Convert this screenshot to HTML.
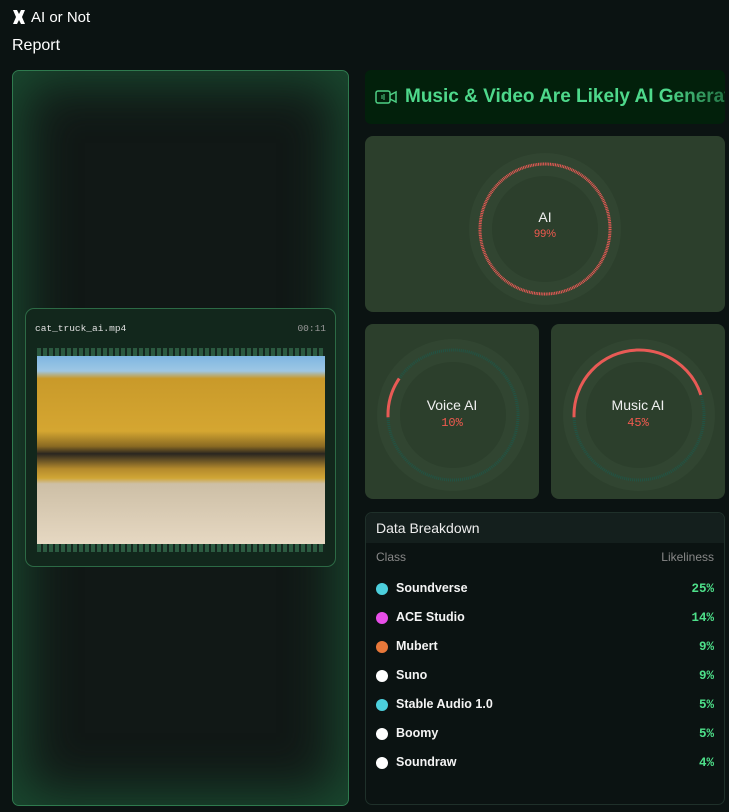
<!DOCTYPE html>
<html><head><meta charset="utf-8"><style>
*{box-sizing:border-box;margin:0;padding:0}
body{width:729px;height:812px;background:#0b1312;font-family:"Liberation Sans",sans-serif;color:#fff;position:relative;overflow:hidden}
.abs{position:absolute}
.mono{font-family:"Liberation Mono",monospace}
.card{background:#2c3f2c;border-radius:8px}
.lbl{position:absolute;left:0;right:0;text-align:center;font-size:14px;color:#f0f0f0}
.pct{position:absolute;left:0;right:0;text-align:center;font-size:12px;color:#f05a4f;font-family:"Liberation Mono",monospace}
.row{position:absolute;left:12px;right:12px;height:20px;font-size:12.5px;font-weight:bold;color:#f4f4f4}
.row .d{position:absolute;left:0;top:4px;width:12px;height:12px;border-radius:50%}
.row .n{position:absolute;left:20px;top:2px}
.row .v{position:absolute;right:0;top:3px;font-family:"Liberation Mono",monospace;color:#4ee08a;font-weight:bold;font-size:12.5px}
</style></head><body>
<svg class="abs" style="left:12px;top:9px" width="14" height="16" viewBox="0 0 14 16"><path d="M1 1h4l2 4 2-4h4l-3 7 3 7h-4l-2-4-2 4H1l3-7z" fill="#fff"/></svg>
<div class="abs" style="left:31px;top:9px;font-size:15px">AI or Not</div>
<div class="abs" style="left:12px;top:37px;font-size:16px">Report</div>

<div class="abs" style="left:12px;top:70px;width:337px;height:736px;border:1px solid #2f7a4e;border-radius:7px;background:#111816;box-shadow:inset 0 0 50px 12px #1a4a30"></div>

<div class="abs" style="left:25px;top:308px;width:311px;height:259px;border:1px solid #2c6a45;border-radius:9px;background:#12271c">
 <div class="abs mono" style="left:9px;top:14px;font-size:9.5px;color:#e0e0e0">cat_truck_ai.mp4</div>
 <div class="abs mono" style="right:9px;top:14px;font-size:9.5px;color:#999">00:11</div>
 <div class="abs" style="left:11px;top:39px;width:288px;height:8px;background:repeating-linear-gradient(90deg,#2b5a40 0 4px,#15261e 4px 6px)"></div>
 <div class="abs" style="left:11px;top:47px;width:288px;height:188px;background:linear-gradient(180deg,#7eb6e2 0%,#9ec7e4 8%,#c99a2a 12%,#d5a631 40%,#8a6a22 48%,#2a2620 52%,#b48a2c 60%,#d0a636 65%,#cdbfa6 68%,#e6d8c2 100%)"></div>
 <div class="abs" style="left:11px;top:235px;width:288px;height:8px;background:repeating-linear-gradient(90deg,#2b5a40 0 4px,#15261e 4px 6px)"></div>
</div>

<div class="abs" style="left:365px;top:70px;width:360px;height:54px;background:#02200b;border-radius:6px;overflow:hidden">
 <svg class="abs" style="left:10px;top:20px" width="22" height="14" viewBox="0 0 22 14"><rect x="1" y="1" width="14" height="12" rx="2" fill="none" stroke="#4ecf85" stroke-width="1.5"/><path d="M15 5l6-3v10l-6-3" fill="none" stroke="#4ecf85" stroke-width="1.5"/><path d="M7 5v4M9 4v6" stroke="#4ecf85"/></svg>
 <div class="abs" style="left:40px;top:16px;font-size:19px;font-weight:bold;white-space:nowrap;color:#4ed88b;-webkit-mask-image:linear-gradient(90deg,#000 75%,rgba(0,0,0,.2) 100%)">Music &amp; Video Are Likely AI Generated</div>
</div>

<div class="abs card" style="left:365px;top:136px;width:360px;height:176px">
 <svg class="abs" style="left:104px;top:17px" width="152" height="152" viewBox="0 0 152 152">
  <circle cx="76" cy="76" r="76" fill="#314531"/>
  <circle cx="76" cy="76" r="65" fill="none" stroke="#e85a55" stroke-width="3" stroke-dasharray="1 0.7"/>
  <circle cx="76" cy="76" r="53" fill="#2c3f2c"/>
 </svg>
 <div class="lbl" style="top:73px">AI</div><div class="pct" style="top:92px;font-family:'Liberation Sans',sans-serif;font-size:11px">99%</div>
</div>

<div class="abs card" style="left:365px;top:324px;width:174px;height:175px">
 <svg class="abs" style="left:12px;top:15px" width="152" height="152" viewBox="0 0 152 152">
  <circle cx="76" cy="76" r="76" fill="#314531"/><circle cx="76" cy="76" r="65" fill="none" stroke="#215445" stroke-width="3" stroke-dasharray="1 1"/>
  <circle cx="76" cy="76" r="65" fill="none" stroke="#e85a55" stroke-width="3" stroke-dasharray="41 400" transform="rotate(178 76 76)"/>
  <circle cx="76" cy="76" r="53" fill="#2c3f2c"/>
 </svg>
 <div class="lbl" style="top:73px">Voice AI</div><div class="pct" style="top:92px">10%</div>
</div>

<div class="abs card" style="left:551px;top:324px;width:174px;height:175px">
 <svg class="abs" style="left:12px;top:15px" width="152" height="152" viewBox="0 0 152 152">
  <circle cx="76" cy="76" r="76" fill="#314531"/><circle cx="76" cy="76" r="65" fill="none" stroke="#215445" stroke-width="3" stroke-dasharray="1 1"/>
  <circle cx="76" cy="76" r="65" fill="none" stroke="#e85a55" stroke-width="3" stroke-dasharray="186 400" transform="rotate(178 76 76)"/>
  <circle cx="76" cy="76" r="53" fill="#2c3f2c"/>
 </svg>
 <div class="lbl" style="top:73px">Music AI</div><div class="pct" style="top:92px">45%</div>
</div>

<div class="abs" style="left:365px;top:512px;width:360px;height:293px;border:1px solid #1f302a;border-radius:7px;background:#0b1312;overflow:hidden">
 <div class="abs" style="left:0;top:0;right:0;height:30px;background:#141f1d"></div>
 <div class="abs" style="left:10px;top:7px;font-size:14px;color:#eee">Data Breakdown</div>
 <div class="abs" style="left:10px;top:37px;font-size:12px;color:#888">Class</div>
 <div class="abs" style="right:10px;top:37px;font-size:12px;color:#888">Likeliness</div>
 <div class="row" style="top:66px;left:10px;right:10px"><span class="d" style="background:#4ccfdc"></span><span class="n">Soundverse</span><span class="v">25%</span></div>
 <div class="row" style="top:95px;left:10px;right:10px"><span class="d" style="background:#e84ee8"></span><span class="n">ACE Studio</span><span class="v">14%</span></div>
 <div class="row" style="top:124px;left:10px;right:10px"><span class="d" style="background:#e8783a"></span><span class="n">Mubert</span><span class="v">9%</span></div>
 <div class="row" style="top:153px;left:10px;right:10px"><span class="d" style="background:#fff"></span><span class="n">Suno</span><span class="v">9%</span></div>
 <div class="row" style="top:182px;left:10px;right:10px"><span class="d" style="background:#4ccfdc"></span><span class="n">Stable Audio 1.0</span><span class="v">5%</span></div>
 <div class="row" style="top:211px;left:10px;right:10px"><span class="d" style="background:#fff"></span><span class="n">Boomy</span><span class="v">5%</span></div>
 <div class="row" style="top:240px;left:10px;right:10px"><span class="d" style="background:#fff"></span><span class="n">Soundraw</span><span class="v">4%</span></div>
</div>
</body></html>
